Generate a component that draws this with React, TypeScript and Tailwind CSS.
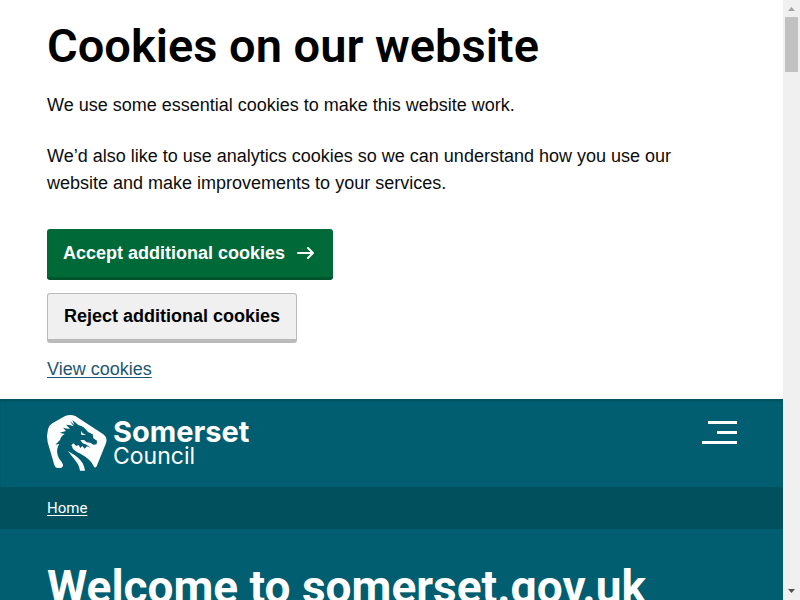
import React from "react";

function DragonLogo() {
  return (
    <svg viewBox="0 0 198 186" className="h-[62px] w-[66px]" aria-hidden="true">
      <path
        fill="#fff"
        d="M62 13Q78 6 94 12L178 67Q190 76 187 91L158 163Q154 170 149 163C142 147 129 136 112 127C98 120 83 113 84 100L60 120L56 150L57 162L52 168H39Q33 166 31 159L11 91Q7 70 12 52Q15 40 25 34Z"
      />
      <path
        fill="#005e70"
        d="M77 26L91 39L85 24L103 39C115 42 126 50 132 60L146 67L148 79L159 86L158 97L148 98L139 92L128 91L120 84L109 84L116 94L128 98L140 108L129 103L122 110L115 102L109 108L104 99L97 102L88 94L82 100C79 111 88 118 101 123L120 138L130 178H70L57 157C53 147 44 142 41 129C37 116 40 104 46 96L34 98L48 84C50 75 56 69 62 66L47 62L66 57L57 47Q69 51 78 50L66 38Q80 39 89 43Z"
      />
      <path fill="#fff" d="M111 56L116 64L126 69L112 69Z" />
      <path fill="#fff" d="M72 117C89 128 120 142 123 176H108C105 151 86 139 72 117Z" />
    </svg>
  );
}

export default function App() {
  return (
    <div className="flex h-screen overflow-hidden bg-white font-['Liberation_Sans',Arial,sans-serif] text-[#0b0c0c]">
      <div className="min-w-0 flex-1 overflow-hidden">
        <section aria-label="Cookies on our website" className="px-[47px] pt-4 pb-4 text-lg leading-[27px]">
          <h2 className="font-['Roboto',sans-serif] text-[47px] leading-[60px] font-semibold text-black">
            Cookies on our website
          </h2>
          <p className="mt-4">We use some essential cookies to make this website work.</p>
          <p className="mt-6 max-w-[660px]">
            We’d also like to use analytics cookies so we can understand how you use our website and make
            improvements to your services.
          </p>
          <div className="mt-8 flex flex-col items-start">
            <button
              type="button"
              className="flex h-[51px] items-center gap-3 rounded-[3px] border-b-3 border-[#00542b] bg-[#006938] pr-[18px] pl-4 font-bold text-white"
            >
              Accept additional cookies
              <svg viewBox="0 0 18 14" className="h-[14px] w-[18px]" fill="none" stroke="currentColor" strokeWidth="2" aria-hidden="true">
                <path d="M1 7H16M11 2L16 7L11 12" strokeLinecap="round" strokeLinejoin="round" />
              </svg>
            </button>
            <button
              type="button"
              className="mt-[13px] h-[50px] rounded-[3px] border border-b-4 border-[#bababa] bg-[#f0f0f0] px-4 font-bold text-black"
            >
              Reject additional cookies
            </button>
            <a href="#cookies" className="mt-[13px] text-[#1d5670] underline underline-offset-2">
              View cookies
            </a>
          </div>
        </section>
        <header className="flex h-[88px] items-start justify-between bg-[#005e70] pr-[46px] pl-11 text-white shadow-[inset_0_2px_2px_#00505e]">
          <a href="#home" className="mt-[13px] flex font-['Inter',sans-serif]">
            <DragonLogo />
            <span className="mt-2 ml-[3px] block">
              <span className="block text-[29px] leading-6 font-bold">Somerset</span>
              <span className="block text-[23px] leading-6">Council</span>
            </span>
          </a>
          <button type="button" aria-label="Menu" className="mt-[22px] flex flex-col items-end gap-[7px]">
            <span className="h-[3px] w-[29px] bg-white" />
            <span className="h-[3px] w-5 bg-white" />
            <span className="h-[3px] w-[35px] bg-white" />
          </button>
        </header>
        <nav aria-label="Breadcrumb" className="flex h-[42px] items-center bg-[#00505e] px-[47px]">
          <a href="#home" className="font-['Roboto',sans-serif] text-[15px] leading-5 text-white underline underline-offset-2">
            Home
          </a>
        </nav>
        <main className="bg-[#005e70] px-[47px] pt-7 pb-10">
          <h1 className="font-['Roboto',sans-serif] text-[46px] leading-[60px] font-bold whitespace-nowrap text-white">
            Welcome to somerset.gov.uk
          </h1>
        </main>
      </div>
      <div aria-hidden="true" className="flex w-[17px] shrink-0 flex-col items-center bg-[#f0f0f0]">
        <svg viewBox="0 0 17 17" className="h-[17px] w-[17px]" fill="#a3a3a3">
          <path d="M5 11H12L8.500 7Z" />
        </svg>
        <div className="h-[55px] w-[13px] bg-[#c1c1c1]" />
        <svg viewBox="0 0 17 17" className="mt-auto h-[17px] w-[17px]" fill="#505050">
          <path d="M5 6H12L8.500 10Z" />
        </svg>
      </div>
    </div>
  );
}
